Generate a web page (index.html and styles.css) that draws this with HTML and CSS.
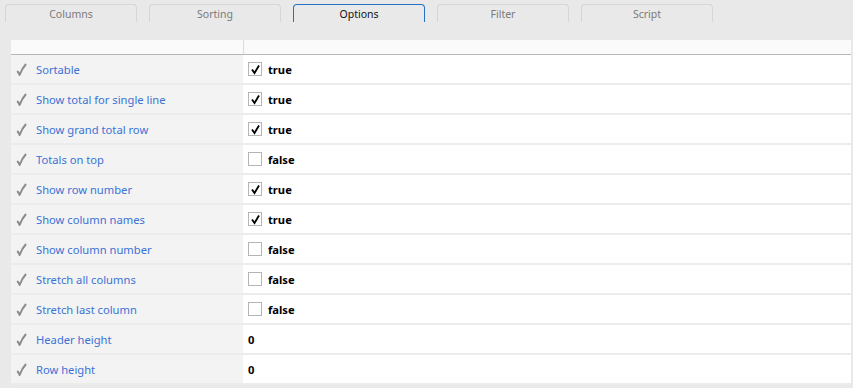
FILE: index.html
```html
<!DOCTYPE html>
<html lang="en">
<head>
    <meta charset="UTF-8">
    <title>Options</title>
    <link rel="stylesheet" href="styles.css">
</head>
<body>
    <div class="tabs">
        <div class="tab">Columns</div>
        <div class="tab">Sorting</div>
        <div class="tab active">Options</div>
        <div class="tab">Filter</div>
        <div class="tab">Script</div>
    </div>

    <div class="grid">
        <div class="head">
            <div class="name-col"></div>
            <div class="value-col"></div>
        </div>
        <div id="rows"></div>
    </div>

    <script>
        const options = [
            { name: 'Sortable', type: 'bool', value: true },
            { name: 'Show total for single line', type: 'bool', value: true },
            { name: 'Show grand total row', type: 'bool', value: true },
            { name: 'Totals on top', type: 'bool', value: false },
            { name: 'Show row number', type: 'bool', value: true },
            { name: 'Show column names', type: 'bool', value: true },
            { name: 'Show column number', type: 'bool', value: false },
            { name: 'Stretch all columns', type: 'bool', value: false },
            { name: 'Stretch last column', type: 'bool', value: false },
            { name: 'Header height', type: 'num', value: 0 },
            { name: 'Row height', type: 'num', value: 0 }
        ];

        const tick = '<svg class="tick" width="11" height="13" viewBox="0 0 11 13"><path d="M1.2 8 Q2.6 9.4 3.6 12 Q6 5.5 10 1" fill="none" stroke="#8c8c8c" stroke-width="2" stroke-linejoin="round"/></svg>';
        const boxTick = '<svg width="11" height="11" viewBox="0 0 11 11"><path d="M2 5.5 L4.5 9 L9 1.5" fill="none" stroke="#000" stroke-width="1.8"/></svg>';

        document.getElementById('rows').innerHTML = options.map(o => `
            <div class="row">
                <div class="name-col">${tick}<span class="label">${o.name}</span></div>
                <div class="value-col">
                    ${o.type === 'bool' ? `<span class="box">${o.value ? boxTick : ''}</span>` : ''}
                    <span class="val">${o.value}</span>
                </div>
            </div>
        `).join('');
    </script>
</body>
</html>
```

FILE: styles.css
```css
body {
    margin: 0;
    background-color: #e9e9e9;
    font-family: 'Noto Sans', sans-serif;
    font-size: 11.2px;
    width: 853px;
    height: 388px;
    overflow: hidden;
}
.tabs {
    display: flex;
    gap: 12px;
    padding: 4px 0 0 5px;
    height: 18px;
}
.tab {
    width: 130px;
    height: 17px;
    border: 1px solid #d6d6d6;
    border-bottom: none;
    border-radius: 4px 4px 0 0;
    text-align: center;
    line-height: 18px;
    color: #7a7a7a;
    font-size: 10.5px;
}
.tab.active {
    border-color: #2472c0;
    color: #111;
}
.grid {
    margin: 18px 0 0 11px;
    width: 840px;
}
.head {
    display: flex;
    height: 14px;
    background-color: #fafafa;
    border-bottom: 1px solid #b7b7b7;
}
.head .name-col {
    border-right: 1px solid #dcdcdc;
}
.name-col {
    width: 232px;
    display: flex;
    align-items: center;
}
.value-col {
    flex: 1;
    display: flex;
    align-items: center;
}
.row {
    display: flex;
    height: 28px;
    border-bottom: 2px solid #ececec;
}
.row .name-col {
    background-color: #f3f3f3;
}
.row .value-col {
    background-color: #fff;
    padding-left: 5px;
}
.tick {
    margin: 1px 9px 0 5px;
}
.label {
    color: #3b72d6;
    padding-top: 1px;
}
.box {
    width: 12px;
    height: 12px;
    border: 1px solid #b5b5b5;
    background: #fff;
    margin-right: 6px;
    display: flex;
    align-items: center;
    justify-content: center;
}
.val {
    font-weight: bold;
    color: #000;
    padding-top: 1px;
}
```
